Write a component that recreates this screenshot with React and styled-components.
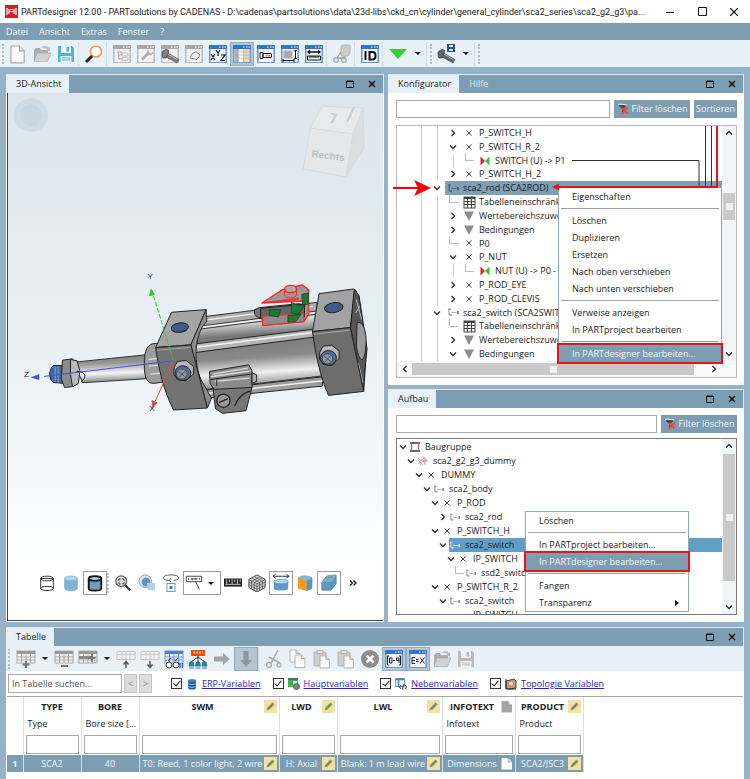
import React from "react";
import styled, { createGlobalStyle, css } from "styled-components";

const GlobalStyle = createGlobalStyle`
  * {
    box-sizing: border-box;
  }

  body {
    margin: 0;
    background: #96b2c9;
    color: #1c1c1c;
    font-family: "Open Sans", "Noto Sans", sans-serif;
    font-size: 9px;
    line-height: 14px;
  }

  button,
  input {
    margin: 0;
    padding: 0;
    border: 0;
    border-radius: 0;
    background: none;
    color: inherit;
    font: inherit;
  }
`;

/* ---------- window ---------- */

const Window = styled.div`
  display: flex;
  flex-direction: column;
  min-height: 100vh;
`;

const TitleBar = styled.header`
  display: flex;
  align-items: center;
  gap: 3px;
  height: 23px;
  padding: 0 0 0 5px;
  background: #fff;
`;

const Title = styled.h1`
  flex: 1;
  min-width: 0;
  margin: 0;
  overflow: hidden;
  white-space: nowrap;
  font-family: Roboto, "Open Sans", sans-serif;
  font-size: 9px;
  font-weight: 400;
`;

const WindowButtons = styled.div`
  display: flex;
`;

const WindowButton = styled.button`
  display: flex;
  align-items: center;
  justify-content: center;
  width: 32px;
  height: 23px;
`;

const MenuBar = styled.nav`
  display: flex;
  align-items: center;
  gap: 11px;
  height: 17px;
  padding: 0 6px;
  background: #7c9db2;
  color: #f2f7fa;
`;

const ToolBar = styled.div`
  display: flex;
  align-items: center;
  height: ${(props) => props.$height || 27}px;
  padding: 0 2px;
  background: #e7f1f7;
`;

const Tool = styled.button`
  display: flex;
  flex: none;
  align-items: center;
  justify-content: center;
  width: ${(props) => (props.$wide ? 38 : 24)}px;
  height: 24px;
  border: 1px solid transparent;
  ${(props) =>
    props.$active &&
    css`
      border-color: #93a9b8;
      background: #b4c6d2;
    `}
  ${(props) =>
    props.$boxed &&
    css`
      border-color: #9a9a9a;
      background: #fff;
    `}
`;

const Caret = styled.button`
  display: flex;
  align-items: center;
  justify-content: center;
  width: ${(props) => props.$width || 16}px;
  height: 24px;

  &::before {
    content: "";
    border: 3px solid transparent;
    border-top-color: #111;
    border-bottom: 0;
  }
`;

const Separator = styled.span`
  width: 4px;
  height: 24px;
  border-left: 1px solid #d3dde4;
`;

const Grip = styled.span`
  width: ${(props) => props.$width || 4}px;
  height: 20px;
  border-left: 2px dotted #b3bfc8;
`;

const Workspace = styled.main`
  display: flex;
  flex: 1;
  flex-direction: column;
  gap: 5px;
  padding: 7px 6px 0;
`;

const Columns = styled.div`
  display: grid;
  grid-template-columns: 378fr 356fr;
  gap: 4px;
`;

const Stack = styled.div`
  display: flex;
  flex-direction: column;
  gap: 4px;
  min-width: 0;
`;

/* ---------- dock panel ---------- */

const Panel = styled.section`
  display: flex;
  flex-direction: column;
  flex: ${(props) => (props.$grow ? 1 : "none")};
  min-width: 0;
  background: #fff;
`;

const PanelHead = styled.div`
  display: flex;
  align-items: stretch;
  height: 19px;
  border-top: 1px solid #dfe9f0;
  border-right: 1px solid #dfe9f0;
  background: #7c9db2;
`;

const Tab = styled.button`
  padding: 0 8px 0 10px;
  background: ${(props) => (props.$active ? "#e7f1f7" : "none")};
  color: ${(props) => (props.$active ? "#1c1c1c" : "#dfe9f0")};
`;

const PanelButton = styled.button`
  display: flex;
  align-items: center;
  justify-content: center;
  width: 22px;
`;

const HeadButtons = styled.div`
  display: flex;
  margin-left: auto;
`;

const PanelBody = styled.div`
  display: flex;
  flex-direction: column;
  gap: ${(props) => props.$gap}px;
  padding: 7px;
  padding-left: 8px;
`;

const SearchRow = styled.div`
  display: flex;
  gap: 4px;
  height: 18px;
`;

const TextBox = styled.input`
  flex: 1;
  min-width: 0;
  border: 1px solid #a9a9a9;
  background: #fff;
`;

const ActionButton = styled.button`
  display: flex;
  align-items: center;
  justify-content: center;
  gap: 3px;
  width: ${(props) => props.$width}px;
  background: #7c9db2;
  color: #f2f7fa;
  white-space: nowrap;
`;

/* ---------- trees ---------- */

const TreeBox = styled.div`
  position: relative;
  display: grid;
  grid-template-columns: minmax(0, 1fr) 14px;
  grid-template-rows: minmax(0, 1fr) auto;
  height: ${(props) => props.$height}px;
  border: 1px solid ${(props) => (props.$dark ? "#777" : "#b9b9b9")};
`;

const TreeList = styled.ul`
  display: grid;
  grid-auto-rows: ${(props) => (props.$fit ? "minmax(13px, 1fr)" : "14px")};
  min-height: 0;
  margin: 0;
  padding: ${(props) => (props.$fit ? "0 0 0 16px" : "1px 0 0")};
  overflow: hidden;
  list-style: none;
`;

const Row = styled.li`
  display: flex;
  align-items: center;
  padding-left: ${(props) => props.$indent || 0}px;
  white-space: nowrap;
`;

const Cell = styled.span`
  display: flex;
  flex: none;
  align-items: center;
  justify-content: center;
  align-self: stretch;
  width: ${(props) => (props.$narrow ? 12 : 16)}px;
`;

const Guide = styled(Cell)`
  &::before {
    content: "";
    width: 1px;
    height: 14px;
    background: #cfcfcf;
  }
`;

const Elbow = styled(Cell)`
  &::before {
    content: "";
    width: 8px;
    height: 7px;
    margin-bottom: 7px;
    border: solid #bbb;
    border-width: 0 0 1px 1px;
  }
`;

const Node = styled.span`
  display: flex;
  flex: 1;
  align-items: center;
  align-self: stretch;
  background: ${(props) => props.$fill || "none"};
`;

const Label = styled.span`
  padding-left: ${(props) => props.$gap || 2}px;
`;

const VScroll = styled.div`
  display: flex;
  flex-direction: column;
  align-items: center;
  padding: 3px 0;
  background: #f2f5f6;
`;

const VTrack = styled.div`
  flex: 1;
  display: flex;
  flex-direction: column;
  width: 12px;
  padding: ${(props) => props.$pad};
`;

const HScroll = styled.div`
  display: flex;
  align-items: center;
  grid-column: 1 / -1;
  height: 16px;
  padding: 0 18px 0 4px;
  background: #f7f9fa;
`;

const HTrack = styled.div`
  display: flex;
  flex: 1;
  padding: 0 16px 0 3px;
`;

const Thumb = styled.div`
  display: flex;
  flex: 1;
  align-items: center;
  justify-content: center;
  min-height: 12px;
  background: #c9c9c9;

  &::before {
    content: "";
    width: 7px;
    height: 7px;
    background: #f1f1f1;
  }
`;

const Wires = styled.svg`
  position: absolute;
  top: -1px;
  left: -8px;
  overflow: visible;
  pointer-events: none;
`;

/* ---------- context menu ---------- */

const Menu = styled.div`
  position: absolute;
  top: ${(props) => props.$top}px;
  left: ${(props) => props.$left}px;
  display: flex;
  flex-direction: column;
  width: 164px;
  border: 1px solid #8ea6b8;
  background: #fff;
`;

const MenuItem = styled.button`
  display: flex;
  align-items: center;
  justify-content: space-between;
  height: 17px;
  padding: 0 8px 0 13px;
  text-align: left;
  ${(props) =>
    props.$marked &&
    css`
      outline: 2px solid #ee1111;
      background: #7c9db2;
      color: #f2f7fa;
    `}
`;

const MenuRule = styled.hr`
  width: calc(100% - 4px);
  margin: 3px 2px;
  border: 0;
  border-top: 1px solid #a0a0a0;
`;

/* ---------- 3D view ---------- */

const View = styled.div`
  position: relative;
  display: flex;
  flex: 1;
  flex-direction: column;
  justify-content: flex-end;
  margin: 0 1px 1px 1px;
  border-left: 1px solid #444;
  border-bottom: 1px solid #444;
  background: linear-gradient(#dde6ed, #e5edf3 35%, #f0f5f8 65%, #fff 90%);
`;

const Scene = styled.svg`
  position: absolute;
  inset: 0;
  width: 100%;
  height: 100%;
`;

const ViewTools = styled.div`
  position: relative;
  display: flex;
  align-items: center;
  padding: 0 0 25px 27px;
`;

/* ---------- table ---------- */

const FilterRow = styled.div`
  display: flex;
  align-items: center;
  height: 25px;
  padding: 0 2px;
`;

const TableSearch = styled(TextBox)`
  flex: none;
  width: 114px;
  height: 19px;
  padding: 0 3px;

  &::placeholder {
    color: #555;
  }
`;

const StepButton = styled.button`
  width: 13px;
  height: 19px;
  margin-left: 2px;
  border: 1px solid #c4c4c4;
  background: #dcdcdc;
  color: #8a8a8a;
`;

const Filters = styled.div`
  display: flex;
  gap: 12px;
  margin-left: 19px;
`;

const FilterLabel = styled.label`
  display: flex;
  align-items: center;
  gap: 4px;

  a {
    color: #2c22dd;
  }
`;

const Check = styled.input`
  display: flex;
  align-items: center;
  justify-content: center;
  width: 11px;
  height: 11px;
  border: 1px solid #333;
  background: #fff;
  appearance: none;

  &:checked::before {
    content: "";
    width: 3px;
    height: 6px;
    margin-bottom: 2px;
    border: solid #222;
    border-width: 0 1px 1px 0;
    transform: rotate(40deg);
  }
`;

const TableWrap = styled.div`
  flex: 1;
  margin: 0 1px;
  padding-bottom: 7px;
  border-top: 1px solid #a9a9a9;
  overflow: hidden;
`;

const DataTable = styled.table`
  width: 576px;
  border-collapse: collapse;
  table-layout: fixed;

  th,
  td {
    padding: 0 2px;
    border-right: 1px solid #ddd;
    overflow: hidden;
    white-space: nowrap;
    font-weight: 400;
    text-align: left;
  }
`;

const HeadName = styled.div`
  display: flex;
  align-items: center;
  height: 19px;
  font-weight: 700;

  span {
    flex: 1;
    text-align: center;
  }
`;

const HeadInfo = styled.div`
  height: 17px;
  padding-left: 2px;
  line-height: 16px;
`;

const ColumnFilter = styled(TextBox)`
  display: block;
  width: 100%;
  height: 19px;
  margin: 2px 0 1px;
`;

const DataRow = styled.tr`
  height: 17px;
  background: #7c9db2;
  color: #f2f7fa;
`;

const Value = styled.div`
  display: flex;
  align-items: center;
  font-weight: ${(props) => (props.$bold ? 700 : 400)};

  span {
    flex: 1;
    overflow: hidden;
    text-align: center;
  }
`;

/* ---------- icons ---------- */

const Svg = ({ size = 20, box = 20, children, ...rest }) => (
  <svg width={size} height={size} viewBox={`0 0 ${box} ${box}`} fill="none" aria-hidden="true" {...rest}>
    {children}
  </svg>
);

const Frame = ({ gray, children }) => (
  <Svg>
    <rect x="1" y="1" width="18" height="18" fill={gray ? "#bdbdbd" : "#6d97cf"} />
    <rect x="1" y="1" width="18" height="4" fill={gray ? "#a9a9a9" : "#3572cf"} />
    <path d="M11 3h1.500M14 3h1.500M16.500 3h1.500" stroke="#fff" />
    <rect x="2.500" y="5" width="15" height="13" fill={gray ? "#f2f2f2" : "#f1f5fb"} />
    {children}
  </Svg>
);

const Page = ({ fill = "#fafafa" }) => (
  <g>
    <path d="M0 0h7l4 4v10H0z" fill={fill} stroke="#aaa" />
    <path d="M7 0v4h4" stroke="#aaa" fill="#ddd" />
  </g>
);

const Floppy = ({ color, light, size = 20 }) => (
  <Svg size={size}>
    <path d="M2 2h14l2 2v14H2z" fill={color} />
    <rect x="5" y="2" width="10" height="7" fill={light} />
    <rect x="10.500" y="3" width="2.500" height="4.500" fill={color} />
    <rect x="4.500" y="12" width="11" height="6" fill={light} />
    <path d="M6 14h8M6 16h8" stroke={color} />
  </Svg>
);

const Folder = () => (
  <Svg>
    <path d="M2 17V6l2-2h4l1 2h7v11z" fill="#adadad" />
    <path d="M2 17.500L5 9h14l-3.500 8.500z" fill="#d2d2d2" stroke="#a5a5a5" strokeWidth=".6" />
    <path d="M9 4c3-3 6-2 8 0l1-1v4h-4l1.200-1.200C13.500 4 11.500 3.500 9 4z" fill="#bbb" />
  </Svg>
);

const Grid = ({ color = "#9a9a9a", children }) => (
  <Svg>
    <rect x="1" y="2" width="18" height="12" fill="#f4f4f4" stroke={color} strokeWidth=".8" />
    <rect x="1" y="2" width="18" height="3" fill={color} />
    <path d="M1 8h18M1 11h18M5.500 5v9M10 5v9M14.500 5v9" stroke={color} strokeWidth=".8" />
    {children}
  </Svg>
);

const Bolt = ({ color = "#666" }) => (
  <g>
    <path d="M6 8l13 7.500-2 3.500L4 12z" fill={color} stroke="#444" strokeWidth=".5" />
    <path d="M2 8l3.500-2.500 3 .5v3L6 14H3l-1-2z" fill={color} stroke="#333" strokeWidth=".6" />
    <path d="M8 10l9 5.500" stroke="#b5b5b5" />
  </g>
);

const Cylinder = ({ fill = "none", top = fill, stroke = "#222", width = 1 }) => (
  <g stroke={stroke} strokeWidth={width}>
    <path d="M3 5v11c0 3.200 14 3.200 14 0V5z" fill={fill} />
    <ellipse cx="10" cy="5" rx="7" ry="2.600" fill={top} />
  </g>
);

const Chevron = ({ open, d }) => (
  <Svg size={8} box={8}>
    <path d={d || (open ? "M1 2.500l3 3 3-3" : "M2.500 1l3 3-3 3")} stroke="#333" strokeWidth="1.400" />
  </Svg>
);

const Pencil = () => (
  <Svg size={13} box={13}>
    <rect width="13" height="13" fill="#efe3a4" />
    <path d="M2.500 10.500l1-3 5-5 2 2-5 5z" fill="#8f8b70" />
    <path d="M4.500 8.500l4-4" stroke="#4e9a4e" />
  </Svg>
);

const Sheet = ({ fill }) => (
  <Svg size={13} box={13}>
    <path d="M1.500 1h6.500l4 4v7.500H1.500z" fill={fill} />
    <path d="M8 1v4h4" fill="#ddd" stroke="#888" strokeWidth=".6" />
  </Svg>
);

const FilterOff = () => (
  <Svg size={12} box={12}>
    <path d="M1 2h9L7 6v4L5 9V6z" fill="#4b4b4b" />
    <path d="M1 2l2-1 7 1" stroke="#eee" />
    <path d="M5 5l5.500 5.500M10.500 4.500L5 11" stroke="#ef4a38" strokeWidth="1.800" />
  </Svg>
);

const PartIcon = ({ color = "#888", light = "#b0b0b0" }) => (
  <Svg size={13} box={13}>
    <path d="M1 3h3M2 3v6h2" stroke={color} />
    <path d="M4.500 6.500h5" stroke={light} />
    <path d="M10 5h2v3h-2z" fill={color} />
    <path d="M3 8h2v2H3z" fill={light} />
  </Svg>
);

const treeIcons = {
  cross: (
    <Svg size={12} box={12}>
      <path d="M3.500 3.500l5 5M8.500 3.500l-5 5" stroke="#444" />
    </Svg>
  ),
  part: <PartIcon />,
  partDark: <PartIcon color="#3f5b6d" light="#4c6d80" />,
  partLight: <PartIcon color="#dce9f2" light="#dce9f2" />,
  bow: (
    <Svg size={12} box={12}>
      <path d="M1.500 1.500L6 6l-4.500 4.500z" fill="#ee1c1c" />
      <path d="M10.500 1.500L6 6l4.500 4.500z" fill="#2fc43a" />
    </Svg>
  ),
  table: (
    <Svg size={13} box={13}>
      <rect x="1" y="1" width="11" height="11" fill="#fff" stroke="#444" />
      <path d="M1 2h11" stroke="#444" strokeWidth="2" />
      <path d="M1 5.500h11M1 8.500h11M4.500 2v10M8.500 2v10" stroke="#444" />
    </Svg>
  ),
  triangle: (
    <Svg size={12} box={12}>
      <path d="M1 1.500h10L6 11z" fill="#8d8d8d" />
    </Svg>
  ),
  group: (
    <Svg size={12} box={12}>
      <path d="M1 2h10M1 10h10" stroke="#666" strokeWidth="2" />
      <path d="M2.500 2v8M9.500 2v8" stroke="#888" strokeWidth="1.500" />
    </Svg>
  ),
  dummy: (
    <Svg size={12} box={12}>
      <path d="M1 3l8 6M2 7l6-5M3 10l6-7M1 5l5 5M5 1l5 4M8 10V5" stroke="#e0a0a0" />
      <path d="M1 8h3M6 6h5" stroke="#999" />
    </Svg>
  ),
};

const MaxIcon = () => (
  <Svg size={8} box={8}>
    <path d="M.5 1h7v6.500h-7z" stroke="#111" />
    <path d="M0 1.500h8" stroke="#111" />
  </Svg>
);

const CloseIcon = ({ size = 8, width = 1.5 }) => (
  <Svg size={size} box={8}>
    <path d="M1 1l6 6M7 1L1 7" stroke="#111" strokeWidth={width} />
  </Svg>
);

/* ---------- data ---------- */

const mainTools = [
  { name: "Neu", icon: <Svg><g transform="translate(3 2) scale(1.200)"><Page /></g></Svg> },
  { name: "Öffnen", icon: <Folder /> },
  { name: "Speichern", icon: <Floppy color="#5ab0d2" light="#eaf5fa" /> },
  "sep",
  {
    name: "Suchen",
    icon: (
      <Svg>
        <circle cx="12" cy="7.500" r="5.500" fill="#fff" stroke="#e39b55" strokeWidth="1.600" />
        <path d="M8 12l-6 6" stroke="#222" strokeWidth="3" />
      </Svg>
    ),
  },
  "sep",
  { name: "Struktur", icon: <Frame gray><path d="M5 8h5M6.500 8v7M6.500 11h4M6.500 15h4" stroke="#aaa" /><path d="M10 9h6v3h-6zM10 13.500h6v3h-6z" stroke="#aaa" strokeWidth=".7" /></Frame> },
  { name: "Werkzeug", icon: <Frame gray><path d="M6 15.500l7-7" stroke="#aaa" strokeWidth="2.500" /><path d="M12 6v3.500l3 1 2-2" stroke="#aaa" strokeWidth="1.500" /></Frame> },
  { name: "Teil", icon: <Frame gray><Bolt color="#808080" /></Frame> },
  { name: "Skizze", icon: <Frame gray><path d="M6 14l2-4 4-2.500 4 3.500-3 4.500z" stroke="#888" /></Frame> },
  { name: "XYZ", icon: <Frame><path d="M3 10l4 6M7 10l-4 6M8 6l2 3 2-3M10 9v3M13 11h4l-4 5.500h4" stroke="#111" strokeWidth="1.200" /></Frame> },
  { name: "Tabelle", active: true, icon: <Frame><rect x="3" y="5" width="3" height="13" fill="#b0b0b0" /><rect x="7" y="5" width="5" height="13" fill="#fff" /><rect x="12" y="5" width="5" height="13" fill="#f1d9b0" /><path d="M2.500 8h15M2.500 11h15M2.500 14h15M6.500 5v13M11.500 5v13" stroke="#aaa" strokeWidth=".7" /></Frame> },
  { name: "Vorschau", icon: <Frame><path d="M4 8.500h3v6H4zM7 9.500h8.500v4H7z" stroke="#222" /><path d="M9.500 11.500h5" stroke="#d99" strokeWidth="2" /></Frame> },
  { name: "Bemaßung", icon: <Frame><rect x="3.500" y="6.500" width="9" height="8" fill="#aaa" /><path d="M3 16.500h11M15.500 6v9M3 15v3M14 15v3M14 6.500h3M14 14.500h3" stroke="#111" /></Frame> },
  { name: "Messen", icon: <Frame><path d="M4 8h12M6 6L4 8l2 2M14 6l2 2-2 2" stroke="#111" strokeWidth="1.300" /><path d="M3.500 12h13v4h-13zM6 12v2M8 12v2M10 12v2M12 12v2M14 12v2" stroke="#111" /></Frame> },
  "sep",
  { name: "Baugruppe", icon: <Svg><path d="M9 2l3-1h6v8l-2 3H9z" fill="#cdcdcd" stroke="#b5b5b5" /><path d="M9 8l-4 6M12 12l1 3M5 14h8" stroke="#a5a5a5" strokeWidth="1.300" /><circle cx="4" cy="16" r="2.300" stroke="#a5a5a5" strokeWidth="1.300" /><circle cx="12" cy="16" r="2.300" stroke="#a5a5a5" strokeWidth="1.300" /></Svg> },
  "sep",
  { name: "ID", icon: <Frame><path d="M5.500 7v9M9.500 8h3c4 0 4 7.500 0 7.500h-3z" stroke="#111" strokeWidth="2" /></Frame> },
  "sep",
  { name: "Export", icon: <Svg><path d="M1 5h18l-9 10z" fill="#35cf35" /></Svg> },
  "caret",
  "sep",
  "grip",
  { name: "Teil speichern", icon: <Svg><Bolt color="#5b6872" /><path d="M11 0h8v8h-8z" fill="#2a5276" /><path d="M13 1h4v2h-4zM13 5h4v2h-4z" fill="#e7f1f7" /></Svg> },
  "caret",
  "sep",
  "grip",
];

const viewTools = [
  { name: "Drahtmodell", icon: <Svg size={18}><Cylinder /><path d="M3 16c0-3 14-3 14 0" stroke="#222" /></Svg> },
  { name: "Schattiert", icon: <Svg size={18}><Cylinder fill="#7fb3d8" top="#b5d5ea" stroke="#7fb3d8" /></Svg> },
  { name: "Schattiert mit Kanten", boxed: true, icon: <Svg size={18}><Cylinder fill="#6d9dba" top="#a9cce0" stroke="#111" width={2} /></Svg> },
  "grip",
  { name: "Zoom", icon: <Svg size={18}><circle cx="8" cy="8" r="6" fill="#ddd" stroke="#666" strokeWidth="1.500" /><path d="M5.500 7.500v-2h2M9 5.500h2v2M5.500 9v2h2M11 9v2H9" stroke="#333" /><path d="M12.500 12.500l5.500 5.500" stroke="#333" strokeWidth="2.500" /></Svg> },
  { name: "Transparenz", icon: <Svg size={18}><circle cx="8" cy="8" r="7" fill="#dbe6ec" stroke="#999" /><circle cx="9" cy="9" r="5" fill="#5f95bd" /><path d="M10 10h9v8h-8z" fill="#b3d2e6" /></Svg> },
  { name: "Drehen", icon: <Svg size={18}><path d="M8 7C-1 7-1 1 10 1s11 6 3 6" stroke="#444" /><path d="M10 5L8 7l2 2" stroke="#444" /><rect x="5.500" y="10.500" width="9" height="9" stroke="#5a93b8" /><rect x="8.500" y="13.500" width="3" height="3" fill="#2b6d9c" /></Svg> },
  { name: "Maß", boxed: true, wide: true, icon: <><Svg size={18}><path d="M1.500 2.500h17v6h-17z" stroke="#333" /><path d="M4 4.500v2M8 4.500v2M12 4.500v2M16 4.500v2M6 5.500h8M12 9l4 8" stroke="#333" /></Svg><Caret as="span" $width={16} /></> },
  { name: "Lineal", icon: <Svg size={18}><rect y="5" width="20" height="9" fill="#222" /><path d="M1.500 11.500h17M3 6v5M6 6v3M9 6v5M12 6v3M15 6v5M18 6v3" stroke="#fff" strokeWidth=".8" /></Svg> },
  { name: "Netz", icon: <Svg size={18}><path d="M10 1l9 5v9l-9 5-9-5V6z" fill="#ddd" stroke="#333" /><path d="M1 6l9 5 9-5M10 11v9M4 4.500l9 5v9M7 3l9 5v9M16 4.500l-9 5v9M13 3L4 8v9M1 9l9 5 9-5M1 12l9 5 9-5" stroke="#444" strokeWidth=".8" /></Svg> },
  { name: "Maße", boxed: true, icon: <Svg size={18}><path d="M1 2.500h18M4 .5l-3 2 3 2M16 .5l3 2-3 2" stroke="#222" /><path d="M2 8v8c0 3 16 3 16 0V8z" fill="#5d9cc0" /><ellipse cx="10" cy="8.500" rx="8" ry="2.500" fill="#b5dbea" stroke="#5d9cc0" /></Svg> },
  { name: "Schnitt", icon: <Svg size={18}><path d="M2 4c5-4 12-3 16 0v12l-6 3z" fill="#86b6d3" /><path d="M2 4l10 4v11L2 16z" fill="#f59a1c" /><path d="M12 8l6-4v12l-6 3z" fill="#5b95b9" /></Svg> },
  { name: "Körper", boxed: true, icon: <Svg size={18}><path d="M2 9l6-7 10-1v10l-6 7H2z" fill="#5f9ac0" stroke="#3d7397" strokeWidth=".7" /><path d="M2 9l6-7 10-1-5 8z" fill="#78adcf" /><path d="M6 4l8-1M13 9v9" stroke="#3a8a5a" strokeDasharray="1.500 1.500" /></Svg> },
];

const Clip = () => (
  <Svg>
    <path d="M2 3h12v14H2z" fill="#cfcfcf" stroke="#b5b5b5" />
    <path d="M5 1.500h6v3H5z" fill="#e8e8e8" stroke="#aaa" />
    <g transform="translate(8 7) scale(.85)"><Page /></g>
  </Svg>
);

const tableTools = [
  { name: "Zeile einfügen", icon: <Grid><path d="M10 12v7M6.500 15.500h7" stroke="#777" strokeWidth="2" /></Grid> },
  "caret",
  { name: "Zeile löschen", icon: <Grid><path d="M7 17h7" stroke="#777" strokeWidth="2" /></Grid> },
  { name: "Spalte einfügen", icon: <Grid><path d="M1 8.500h13" stroke="#888" strokeWidth="3" /><path d="M14 5v8M10.500 9h7" stroke="#777" strokeWidth="2" /></Grid> },
  "caret",
  { name: "Nach oben", icon: <Svg><path d="M1 2.500h18v8H1zM1 5.500h18M6 3v7M10 3v7M14 3v7" stroke="#bbb" strokeWidth=".8" fill="#f5f5f5" /><path d="M10 19v-6M7.500 15.500L10 12.500l2.500 3" stroke="#555" strokeWidth="1.500" /></Svg> },
  { name: "Nach unten", icon: <Svg><path d="M1 2.500h18v8H1zM1 5.500h18M6 3v7M10 3v7M14 3v7" stroke="#bbb" strokeWidth=".8" fill="#f5f5f5" /><path d="M10 12v6M7.500 15.500l2.500 3 2.500-3" stroke="#555" strokeWidth="1.500" /></Svg> },
  { name: "Ansicht", icon: <Grid color="#4b80cf"><circle cx="5" cy="16" r="3" fill="#fff" stroke="#333" /><circle cx="12" cy="16" r="3" fill="#fff" stroke="#333" /><path d="M4 12l3-3M11 12l3-3" stroke="#333" /><path d="M16 14v5M18.500 14v5" stroke="#3b62b0" strokeWidth="1.500" /></Grid> },
  { name: "Hierarchie", icon: <Svg><rect x="3" y="1" width="14" height="6" fill="#ed4a17" /><path d="M5 3.500h10" stroke="#ffc13b" strokeDasharray="2 1" strokeWidth="2" /><path d="M10 7v6M10 8l-7 5M10 8l7 5" stroke="#333" /><path d="M1 17l1-4h3l1 4zM7.500 17l1-4h3l1 4zM14 17l1-4h3l1 4zM1 19h5M7.500 19h5M14 19h5" fill="#2a83b8" stroke="#1d6592" strokeWidth=".8" /></Svg> },
  { name: "Rechts", icon: <Svg><path d="M2 7.500h9V4l7 6-7 6v-3.500H2z" fill="#a3a3a3" /></Svg> },
  { name: "Unten", active: true, icon: <Svg><path d="M7.500 2h5v9H16l-6 7-6-7h3.500z" fill="#8e979d" /></Svg> },
  "sep",
  { name: "Ausschneiden", icon: <Svg><path d="M14 1L7 14M5 8l11 6" stroke="#aaa" strokeWidth="1.500" /><circle cx="5" cy="16" r="2.500" stroke="#aaa" strokeWidth="1.300" /><circle cx="15" cy="16" r="2" stroke="#b5b5b5" strokeWidth="1.300" /></Svg> },
  { name: "Kopieren", icon: <Svg><g transform="translate(2 1) scale(.85)"><Page /></g><g transform="translate(7 6) scale(.9)"><Page /></g></Svg> },
  { name: "Einfügen", icon: <Clip /> },
  { name: "Als Zeile einfügen", icon: <Clip /> },
  { name: "Abbrechen", icon: <Svg><circle cx="10" cy="10" r="9" fill="#8b8b8b" /><path d="M6.500 6.500l7 7M13.500 6.500l-7 7" stroke="#fff" strokeWidth="2.500" /></Svg> },
  { name: "Wertebereich", active: true, icon: <Frame><path d="M5 7H3.500v9H5M15 7h1.500v9H15M5.500 9h2.500v5H5.500zM9 11.500h2M15 14V9h-2.500v2.500H15" stroke="#222" /></Frame> },
  { name: "Ausdruck", active: true, icon: <Frame><path d="M7 8.500H4v6h3M4 11.500h3M8 10.500h2.500M8 12.500h2.500M12 8.500l4.500 6M16.500 8.500l-4.500 6" stroke="#222" /></Frame> },
  { name: "Laden", icon: <Folder /> },
  { name: "Sichern", icon: <Floppy color="#b9b9b9" light="#f0f0f0" /> },
];

const configRows = [
  { level: 1, toggle: "closed", icon: "cross", text: "P_SWITCH_H" },
  { level: 1, toggle: "open", icon: "cross", text: "P_SWITCH_R_2" },
  { level: 2, icon: "bow", text: "SWITCH (U) -> P1" },
  { level: 1, toggle: "closed", icon: "cross", text: "P_SWITCH_H_2" },
  { level: 0, toggle: "open", icon: "partDark", text: "sca2_rod (SCA2ROD)", fill: "#7f9fb5" },
  { level: 1, icon: "table", text: "Tabelleneinschränku" },
  { level: 1, toggle: "closed", icon: "triangle", text: "Wertebereichszuwe" },
  { level: 1, toggle: "closed", icon: "triangle", text: "Bedingungen" },
  { level: 1, icon: "cross", text: "P0" },
  { level: 1, toggle: "open", icon: "cross", text: "P_NUT" },
  { level: 2, icon: "bow", text: "NUT (U) -> P0 -" },
  { level: 1, toggle: "closed", icon: "cross", text: "P_ROD_EYE" },
  { level: 1, toggle: "closed", icon: "cross", text: "P_ROD_CLEVIS" },
  { level: 0, toggle: "open", icon: "part", text: "sca2_switch (SCA2SWIT" },
  { level: 1, icon: "table", text: "Tabelleneinschränku" },
  { level: 1, toggle: "closed", icon: "triangle", text: "Wertebereichszuwe" },
  { level: 1, toggle: "open", icon: "triangle", text: "Bedingungen" },
];

const buildRows = [
  { level: 0, toggle: "open", icon: "group", text: "Baugruppe" },
  { level: 1, toggle: "open", icon: "dummy", text: "sca2_g2_g3_dummy" },
  { level: 2, toggle: "open", icon: "cross", text: "DUMMY" },
  { level: 3, toggle: "open", icon: "part", text: "sca2_body" },
  { level: 4, toggle: "open", icon: "cross", text: "P_ROD" },
  { level: 5, toggle: "closed", icon: "part", text: "sca2_rod" },
  { level: 4, toggle: "open", icon: "cross", text: "P_SWITCH_H" },
  { level: 5, toggle: "open", icon: "partLight", text: "sca2_switch", fill: "#619ec4" },
  { level: 6, toggle: "open", icon: "cross", text: "IP_SWITCH" },
  { level: 7, icon: "part", text: "ssd2_switch" },
  { level: 4, toggle: "open", icon: "cross", text: "P_SWITCH_R_2" },
  { level: 5, toggle: "open", icon: "part", text: "sca2_switch" },
  { level: 6, icon: "", text: "IP_SWITCH" },
];

const configMenu = [
  "Eigenschaften",
  null,
  "Löschen",
  "Duplizieren",
  "Ersetzen",
  "Nach oben verschieben",
  "Nach unten verschieben",
  null,
  "Verweise anzeigen",
  "In PARTproject bearbeiten",
  null,
  "In PARTdesigner bearbeiten...",
];

const buildMenu = [
  "Löschen",
  null,
  "In PARTproject bearbeiten...",
  "In PARTdesigner bearbeiten...",
  null,
  "Fangen",
  "Transparenz",
];

const filters = [
  { text: "ERP-Variablen", icon: <Svg size={12} box={12}><path d="M2 2v8c0 2 8 2 8 0V2z" fill="#1f5f9e" /><ellipse cx="6" cy="2.500" rx="4" ry="1.500" fill="#3b86cc" /><path d="M2 5c0 2 8 2 8 0M2 8c0 2 8 2 8 0" stroke="#9cc7e8" /></Svg> },
  { text: "Hauptvariablen", icon: <Svg size={12} box={12}><rect width="10" height="9" fill="#35b545" /><rect width="10" height="2" fill="#3f6f9a" /><path d="M5 3h4v5H5z" fill="#d9f0dc" /><circle cx="8.500" cy="8.500" r="3" fill="#888" stroke="#555" /></Svg> },
  { text: "Nebenvariablen", icon: <Svg size={12} box={12}><path d="M.5.5h9v8h-9z" fill="#e7eff5" stroke="#7a9db5" /><path d="M.5 1.500h9M3.500 2v7" stroke="#4d86ad" strokeWidth="1.500" /><path d="M6 7L4.500 9 6 11M10 7l1.500 2L10 11M8.500 6.500l-1 5" stroke="#222" /></Svg> },
  { text: "Topologie Variablen", icon: <Svg size={12} box={12}><path d="M1 3l8-2 2 2v7l-8 1-2-1z" fill="#b9a187" stroke="#444" /><circle cx="6" cy="5.500" r="2.500" fill="#f2d9bd" stroke="#d07c3a" /><path d="M1 1v10h10" stroke="#222" /></Svg> },
];

const columns = [
  { name: "TYPE", info: "Type", width: 58, value: "SCA2" },
  { name: "BORE", info: "Bore size [...", width: 58, value: "40" },
  { name: "SWM", width: 140, value: "T0: Reed, 1 color light, 2 wire", mark: "pencil" },
  { name: "LWD", width: 58, value: "H: Axial", mark: "pencil" },
  { name: "LWL", width: 105, value: "Blank: 1 m lead wire", mark: "pencil" },
  { name: "INFOTEXT", info: "Infotext", width: 73, value: "Dimensions", mark: "sheet" },
  { name: "PRODUCT", info: "Product", width: 68, value: "SCA2/JSC3", mark: "pencil" },
];

/* ---------- components ---------- */

const Tools = ({ items, caret }) =>
  items.map((item, i) => {
    if (item === "sep") return <Separator key={i} />;
    if (item === "grip") return <Grip key={i} />;
    if (item === "caret") return <Caret key={i} $width={caret} aria-label="Mehr" />;
    return (
      <Tool key={i} aria-label={item.name} $active={item.active} $boxed={item.boxed} $wide={item.wide}>
        {item.icon}
      </Tool>
    );
  });

const DockPanel = ({ tabs, grow, children }) => (
  <Panel $grow={grow}>
    <PanelHead>
      {tabs.map((tab, i) => (
        <Tab key={tab} $active={i === 0}>
          {tab}
        </Tab>
      ))}
      <HeadButtons>
        <PanelButton aria-label="Maximieren"><MaxIcon /></PanelButton>
        <PanelButton aria-label="Schließen"><CloseIcon /></PanelButton>
      </HeadButtons>
    </PanelHead>
    {children}
  </Panel>
);

const ContextMenu = ({ items, top, left }) => (
  <Menu $top={top} $left={left}>
    {items.map((item, i) =>
      item ? (
        <MenuItem key={i} $marked={item.startsWith("In PARTdesigner")}>
          {item}
          {item === "Transparenz" && (
            <Svg size={6} box={6}>
              <path d="M1 0l4 3-4 3z" fill="#111" />
            </Svg>
          )}
        </MenuItem>
      ) : (
        <MenuRule key={i} />
      )
    )}
  </Menu>
);

const ConfigTree = () => (
  <TreeBox $height={253}>
    <TreeList $fit>
      {configRows.map((row, i) => (
        <Row key={i}>
          {Array.from({ length: row.level + 1 }, (_, n) => (
            <Guide key={n} />
          ))}
          {row.toggle ? <Cell><Chevron open={row.toggle === "open"} /></Cell> : <Elbow />}
          <Node $fill={row.fill}>
            <Cell>{treeIcons[row.icon]}</Cell>
            <Label>{row.text}</Label>
          </Node>
        </Row>
      ))}
    </TreeList>
    <VScroll>
      <Chevron d="M1 5.500l3-3 3 3" />
      <VTrack $pad="56px 0 130px"><Thumb /></VTrack>
      <Chevron open />
    </VScroll>
    <HScroll>
      <Chevron d="M5.500 1l-3 3 3 3" />
      <HTrack><Thumb /></HTrack>
      <Chevron />
    </HScroll>
    <ContextMenu items={configMenu} top={61} left={161} />
    <Wires width="340" height="70">
      <path d="M183 35.500h127v26M316.500 1v60M322.500 1v60" stroke="#333" fill="none" />
      <path d="M328 1v61H167" stroke="#ee1111" strokeWidth="2" fill="none" />
      <path d="M170 58.500v7l-7-3.500z" fill="#ee1111" />
      <path d="M4 63h28" stroke="#ff0000" strokeWidth="2" />
      <path d="M25 55l17 8-17 8 4-8z" fill="#ff0000" />
    </Wires>
  </TreeBox>
);

const BuildTree = () => (
  <TreeBox $height={177} $dark>
    <TreeList>
      {buildRows.map((row, i) => (
        <Row key={i} $indent={row.level * 8}>
          {row.toggle ? <Cell $narrow><Chevron open={row.toggle === "open"} /></Cell> : row.icon ? <Elbow $narrow /> : <Cell $narrow />}
          <Node $fill={row.fill}>
            <Cell $narrow>{treeIcons[row.icon]}</Cell>
            <Label $gap={4}>{row.text}</Label>
          </Node>
        </Row>
      ))}
    </TreeList>
    <VScroll>
      <Chevron d="M1 5.500l3-3 3 3" />
      <VTrack $pad="4px 0 22px"><Thumb /></VTrack>
      <Chevron open />
    </VScroll>
    <ContextMenu items={buildMenu} top={72} left={128} />
  </TreeBox>
);

const Port = ({ x, y }) => (
  <g transform={`translate(${x} ${y})`}>
    <path d="M-28-14l10-18 26-3 22 18v22L8 26l-26-3-11-16z" fill="#b8b8b8" stroke="#222" strokeWidth="3" />
    <ellipse cx="-2" cy="3" rx="24" ry="22" fill="#4f6f9c" stroke="#222" strokeWidth="3" />
    <ellipse cx="-5" cy="6" rx="16" ry="15" fill="#8d98a8" stroke="#333" strokeWidth="2" />
    <path d="M-15-2l20 16M5-4l-18 20" stroke="#333" strokeWidth="2" />
  </g>
);

const CylinderScene = () => (
  <Scene viewBox="0 0 376 528" preserveAspectRatio="xMidYMid meet">
    <defs>
      <linearGradient id="barrel" x1="0" y1="0" x2=".12" y2="1">
        <stop offset="0" stopColor="#8d8d8d" />
        <stop offset=".15" stopColor="#d8d8d8" />
        <stop offset=".32" stopColor="#777" />
        <stop offset=".62" stopColor="#8a8a8a" />
        <stop offset=".82" stopColor="#f1f1f1" />
        <stop offset="1" stopColor="#8c8c8c" />
      </linearGradient>
      <linearGradient id="rod" x1="0" y1="0" x2=".1" y2="1">
        <stop offset="0" stopColor="#777" />
        <stop offset=".35" stopColor="#999" />
        <stop offset=".7" stopColor="#f4f4f4" />
        <stop offset="1" stopColor="#888" />
      </linearGradient>
    </defs>

    <circle cx="23" cy="22" r="17" fill="#cedce7" />
    <circle cx="23" cy="22" r="12" fill="#c8d6e1" stroke="#d0dde7" strokeWidth="2" />

    <g stroke="#d6dde2">
      <path d="M303 35l12-22 41 2-10 26z" fill="#e6ebee" />
      <path d="M303 35l43 6-7 43-43-8z" fill="#e3e8eb" />
      <path d="M346 41l10-26 1 40-18 29z" fill="#d9e0e4" />
    </g>
    <path d="M324 20l5 2-5 8M347 14l-7 15" stroke="#c6cdd2" strokeWidth="2" fill="none" />
    <text x="304" y="64" transform="rotate(7 304 64)" fill="#b9bfc5" fontFamily="Liberation Sans, sans-serif" fontWeight="700" fontSize="10">
      Rechts
    </text>

    <g transform="translate(-8 167) scale(.3333)" strokeLinejoin="round">
      <path d="M224 308l214-22v72l-190 12z" fill="url(#rod)" stroke="#333" strokeWidth="3" />
      <path d="M160 318h32v54l-32-3c-14-12-14-38 0-51z" fill="#3f6ba5" stroke="#222" strokeWidth="3" />
      <path d="M166 322v46M175 320v50" stroke="#7da2cf" strokeWidth="3" />
      <path d="M188 302l30-4 12 20v52l-14 12-22 2-10-26z" fill="#8c8c8c" stroke="#222" strokeWidth="3" />
      <path d="M212 300l20 4 8 30-4 38-18 10-6-36z" fill="#bababa" stroke="#222" strokeWidth="3" />
      <path d="M230 336c26-2 34 18 14 30" fill="none" stroke="#222" strokeWidth="3" />
      <path d="M470 252c-26-2-36 20-36 60s6 60 28 60l40-6-10-112z" fill="#9c9c9c" stroke="#222" strokeWidth="3" />
      <path d="M446 300l40-4M448 320l40-4M452 344l44-4" stroke="#d8d8d8" strokeWidth="4" />

      <path d="M608 172l346-44v26l-340 44z" fill="#aaa" stroke="#333" strokeWidth="3" />
      <path d="M612 182l330-42" stroke="#f0f0f0" strokeWidth="4" />
      <path d="M590 210l360-46 32 184-362 42c-34-50-40-120-30-180z" fill="url(#barrel)" stroke="#333" strokeWidth="3" />
      <path d="M580 254l370-46v24l-370 48z" fill="#b5b5b5" stroke="#222" strokeWidth="3" />
      <path d="M584 264l366-46" stroke="#f4f4f4" strokeWidth="5" />
      <path d="M618 392l352-40v28l-350 36z" fill="#9d9d9d" stroke="#222" strokeWidth="3" />
      <path d="M622 402l350-38" stroke="#eee" strokeWidth="5" />

      <path d="M516 158l104-8-46 106-106 8z" fill="#a4a4a4" stroke="#222" strokeWidth="3" />
      <path d="M620 150l2 36c-34 30-42 110-20 170l34 60-12 30-50-190z" fill="#8c8c8c" stroke="#222" strokeWidth="3" />
      <path d="M468 264l106-8 50 190-102 6c-30-60-44-120-54-188z" fill="#737373" stroke="#222" strokeWidth="3" />
      <path d="M472 272l100-8" stroke="#aaa" strokeWidth="3" />
      <ellipse cx="541" cy="204" rx="26" ry="14" transform="rotate(-8 541 204)" fill="#3f5b88" stroke="#222" strokeWidth="3" />
      <Port x={552} y={338} />

      <path d="M960 102l104-14 8 6-18 110-114 12z" fill="#a2a2a2" stroke="#222" strokeWidth="3" />
      <path d="M1066 88l14 20 24 160-4 40-6 88-40-192z" fill="#555" stroke="#111" strokeWidth="3" />
      <path d="M1074 190c20-10 36 40 22 100-8 24-20 0-24-30z" fill="#999" stroke="#222" strokeWidth="3" />
      <path d="M1072 120l16 60M1078 310l14 60M1070 160l12-20" stroke="#bbb" strokeWidth="3" />
      <path d="M940 216l114-12 40 192-106 12c-26-60-38-120-48-192z" fill="#6d6d6d" stroke="#222" strokeWidth="3" />
      <path d="M944 224l108-12" stroke="#aaa" strokeWidth="3" />
      <ellipse cx="1004" cy="144" rx="28" ry="15" transform="rotate(-8 1004 144)" fill="#3f5b88" stroke="#222" strokeWidth="3" />
      <Port x={990} y={292} />

      <path d="M766 150l14-6 120-12 20 8v30l-130 8-14-4-10-10z" fill="#777" stroke="#222" strokeWidth="3" />
      <path d="M788 130l62-40 60-14 18 14v74l-14 22-124 12v-30l120-14v-30z" fill="#9a9a9a" stroke="#ff2222" strokeWidth="4" />
      <path d="M784 146l132-12v38l-132 6z" fill="#666" stroke="#222" strokeWidth="3" />
      <path d="M790 170l124-8v24l-124 12z" fill="#8c8c8c" stroke="#ff2222" strokeWidth="3" />
      <path d="M810 150l34 0-6 22-28-4zM876 128l22 10 20-4-20 30-22-4zM866 168l40-4-16 22-24 2zM908 104l20-4v34l-18 2z" fill="#1d7a32" stroke="#123c1a" strokeWidth="2" />
      <ellipse cx="874" cy="88" rx="18" ry="11" fill="#aaa" stroke="#ff2222" strokeWidth="4" />
      <path d="M856 90v14c0 14 36 14 36 0V90M832 126l66-8M800 128l100-12" fill="none" stroke="#ff2222" strokeWidth="3" />

      <path d="M640 380l110-6 8 10-18 70-70 8-22-14z" fill="#777" stroke="#222" strokeWidth="3" />
      <path d="M630 336l118-20 10 18v50l-114 6-12-18z" fill="#8b8b8b" stroke="#222" strokeWidth="3" />
      <path d="M634 352l120-18M646 366l104-10M640 344l106-18" stroke="#ddd" strokeWidth="4" />
      <path d="M634 360l120-16M652 380v-20" stroke="#222" strokeWidth="3" />
      <path d="M758 340l14 6v20l-14 6z" fill="#aaa" stroke="#222" strokeWidth="3" />
      <circle cx="672" cy="424" r="20" fill="#999" stroke="#222" strokeWidth="4" />
      <path d="M658 430l28-12M706 440c10-30 30-40 48-46" stroke="#222" strokeWidth="4" fill="none" />

      <path d="M522 304L456 90" stroke="#22cc33" strokeWidth="3" strokeDasharray="14 5" />
      <path d="M454 86l-6 24 18-4z" fill="#22cc33" />
      <path d="M522 304l-390 47" stroke="#4a4fe0" strokeWidth="3" />
      <path d="M92 354l26-10v18z" fill="#4a4fe0" />
      <path d="M522 304l-60 132" stroke="#ee4444" strokeWidth="3" />
      <path d="M458 446l-2-24 18 8z" fill="#ee4444" />
    </g>
    <g fill="#222" fontSize="8" fontFamily="Liberation Sans, sans-serif">
      <text x="140" y="186">Y</text>
      <text x="142" y="319">X</text>
      <text x="16" y="285">Z</text>
    </g>
  </Scene>
);

const VariableTable = () => (
  <TableWrap>
    <DataTable>
      <colgroup>
        <col style={{ width: 16 }} />
        {columns.map((c) => (
          <col key={c.name} style={{ width: c.width }} />
        ))}
      </colgroup>
      <thead>
        <tr>
          <th />
          {columns.map((c) => (
            <th key={c.name}>
              <HeadName>
                <span>{c.name}</span>
                {c.mark === "pencil" && <Pencil />}
                {c.mark === "sheet" && <Sheet fill="#a5a5a5" />}
              </HeadName>
              <HeadInfo>{c.info}</HeadInfo>
              <ColumnFilter aria-label={`Filter ${c.name}`} />
            </th>
          ))}
        </tr>
      </thead>
      <tbody>
        <DataRow>
          <th>
            <Value $bold><span>1</span></Value>
          </th>
          {columns.map((c) => (
            <td key={c.name}>
              <Value>
                <span>{c.value}</span>
                {c.mark === "pencil" && <Pencil />}
                {c.mark === "sheet" && <Sheet fill="#fff" />}
              </Value>
            </td>
          ))}
        </DataRow>
      </tbody>
    </DataTable>
  </TableWrap>
);

const App = () => (
  <>
    <GlobalStyle />
    <Window>
      <TitleBar>
        <Svg size={13} box={13}>
          <rect width="13" height="13" fill="#cf2027" />
          <path d="M2 3v7M11 3v7M4 4v5M9 4v5M4 6.500h5M5 4.500h3" stroke="#fff" strokeWidth="1.200" />
        </Svg>
        <Title>
          {"PARTdesigner 12.00 - PARTsolutions by CADENAS - D:\\cadenas\\partsolutions\\data\\23d-libs\\ckd_cn\\cylinder\\general_cylinder\\sca2_series\\sca2_g2_g3\\pa..."}
        </Title>
        <WindowButtons>
          <WindowButton aria-label="Minimieren">
            <Svg size={8} box={8}><path d="M0 4.500h8" stroke="#111" /></Svg>
          </WindowButton>
          <WindowButton aria-label="Maximieren">
            <Svg size={9} box={9}><path d="M.5.5h8v8h-8z" stroke="#111" /></Svg>
          </WindowButton>
          <WindowButton aria-label="Schließen"><CloseIcon size={10} width={0.9} /></WindowButton>
        </WindowButtons>
      </TitleBar>
      <MenuBar>
        {["Datei", "Ansicht", "Extras", "Fenster", "?"].map((name) => (
          <button key={name}>{name}</button>
        ))}
      </MenuBar>
      <ToolBar>
        <Grip />
        <Tools items={mainTools} />
      </ToolBar>

      <Workspace>
        <Columns>
          <DockPanel tabs={["3D-Ansicht"]}>
            <View>
              <CylinderScene />
              <ViewTools>
                <Tools items={viewTools} />
                <Tool aria-label="Weitere">
                  <Svg size={8} box={8}><path d="M1 1.500L3.500 4 1 6.500M4.500 1.500L7 4 4.500 6.500" stroke="#111" strokeWidth="1.300" /></Svg>
                </Tool>
              </ViewTools>
            </View>
          </DockPanel>
          <Stack>
            <DockPanel tabs={["Konfigurator", "Hilfe"]}>
              <PanelBody $gap={7}>
                <SearchRow>
                  <TextBox aria-label="Konfigurator filtern" />
                  <ActionButton $width={76}><FilterOff />Filter löschen</ActionButton>
                  <ActionButton $width={43}>Sortieren</ActionButton>
                </SearchRow>
                <ConfigTree />
              </PanelBody>
            </DockPanel>
            <DockPanel tabs={["Aufbau"]}>
              <PanelBody $gap={5}>
                <SearchRow>
                  <TextBox aria-label="Aufbau filtern" />
                  <ActionButton $width={76}><FilterOff />Filter löschen</ActionButton>
                </SearchRow>
                <BuildTree />
              </PanelBody>
            </DockPanel>
          </Stack>
        </Columns>

        <DockPanel tabs={["Tabelle"]} grow>
          <ToolBar $height={25}>
            <Grip $width={6} />
            <Tools items={tableTools} caret={14} />
          </ToolBar>
          <FilterRow>
            <TableSearch placeholder="In Tabelle suchen..." aria-label="In Tabelle suchen" />
            <StepButton>&lt;</StepButton>
            <StepButton>&gt;</StepButton>
            <Filters>
              {filters.map((f) => (
                <FilterLabel key={f.text}>
                  <Check type="checkbox" defaultChecked />
                  {f.icon}
                  <a href="#">{f.text}</a>
                </FilterLabel>
              ))}
            </Filters>
          </FilterRow>
          <VariableTable />
        </DockPanel>
      </Workspace>
    </Window>
  </>
);

export default App;
